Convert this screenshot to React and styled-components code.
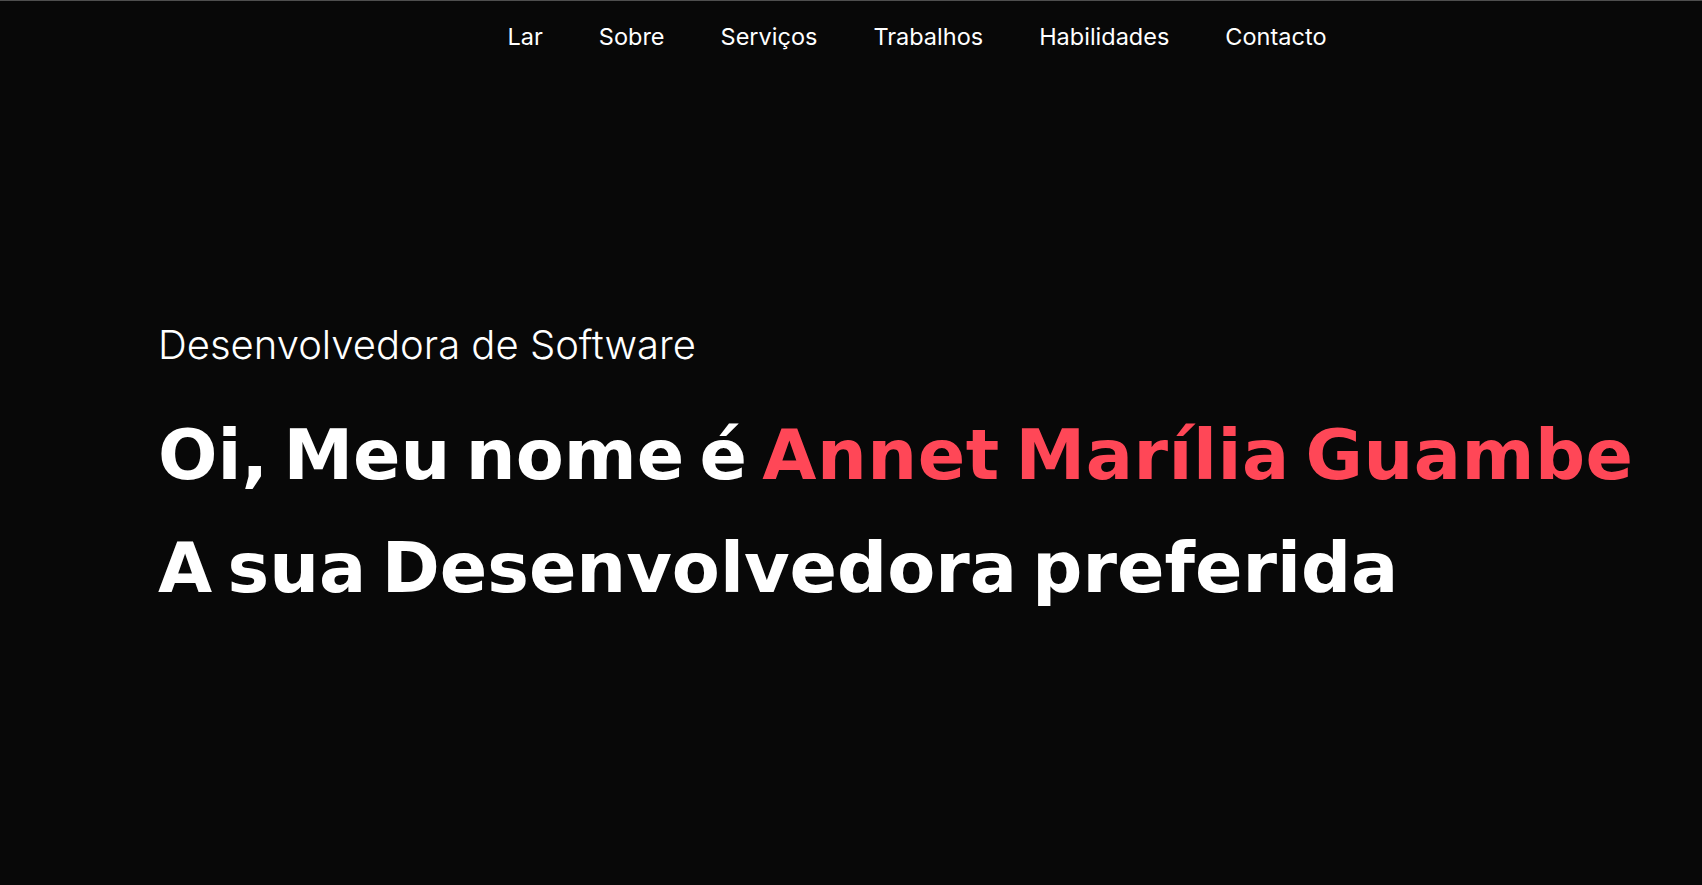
import React from "react";
import styled, { createGlobalStyle } from "styled-components";

const GlobalStyle = createGlobalStyle`
  * {
    margin: 0;
    padding: 0;
    box-sizing: border-box;
  }
  body {
    background-color: #080808;
    color: #fff;
    font-family: "Inter", "Open Sans", sans-serif;
  }
`;

const Header = styled.header`
  min-height: 100vh;
  width: 100%;
  border-top: 1px solid #4e4e4e;
`;

const Nav = styled.nav`
  display: flex;
  justify-content: center;
  padding: 22px 0 0 132px;
`;

const NavList = styled.ul`
  display: flex;
  gap: 56px;
  list-style: none;
`;

const NavItem = styled.li`
  font-size: 23.5px;
  line-height: 28px;
`;

const NavLink = styled.a`
  display: block;
  color: #fff;
  text-decoration: none;
  font-weight: 400;
`;

const HeaderText = styled.div`
  padding: 270px 0 0 158px;
`;

const Subtitle = styled.p`
  font-size: 40px;
  line-height: 48px;
  font-weight: 300;
`;

const Title = styled.h1`
  margin-top: 30px;
  font-family: "DejaVu Sans", "Inter", sans-serif;
  font-size: 70px;
  line-height: 112.5px;
  font-weight: 700;
  word-spacing: -9px;
  white-space: nowrap;
`;

const Highlight = styled.span`
  color: #ff4757;
  letter-spacing: 0.5px;
`;

const links = ["Lar", "Sobre", "Serviços", "Trabalhos", "Habilidades", "Contacto"];

export default function App() {
  return (
    <>
      <GlobalStyle />
      <Header id="header">
        <Nav>
          <NavList>
            {links.map((l) => (
              <NavItem key={l}>
                <NavLink href="#">{l}</NavLink>
              </NavItem>
            ))}
          </NavList>
        </Nav>
        <HeaderText>
          <Subtitle>Desenvolvedora de Software</Subtitle>
          <Title>
            Oi, Meu nome é <Highlight>Annet Marília Guambe</Highlight>
            <br />
            A sua Desenvolvedora preferida
          </Title>
        </HeaderText>
      </Header>
    </>
  );
}
